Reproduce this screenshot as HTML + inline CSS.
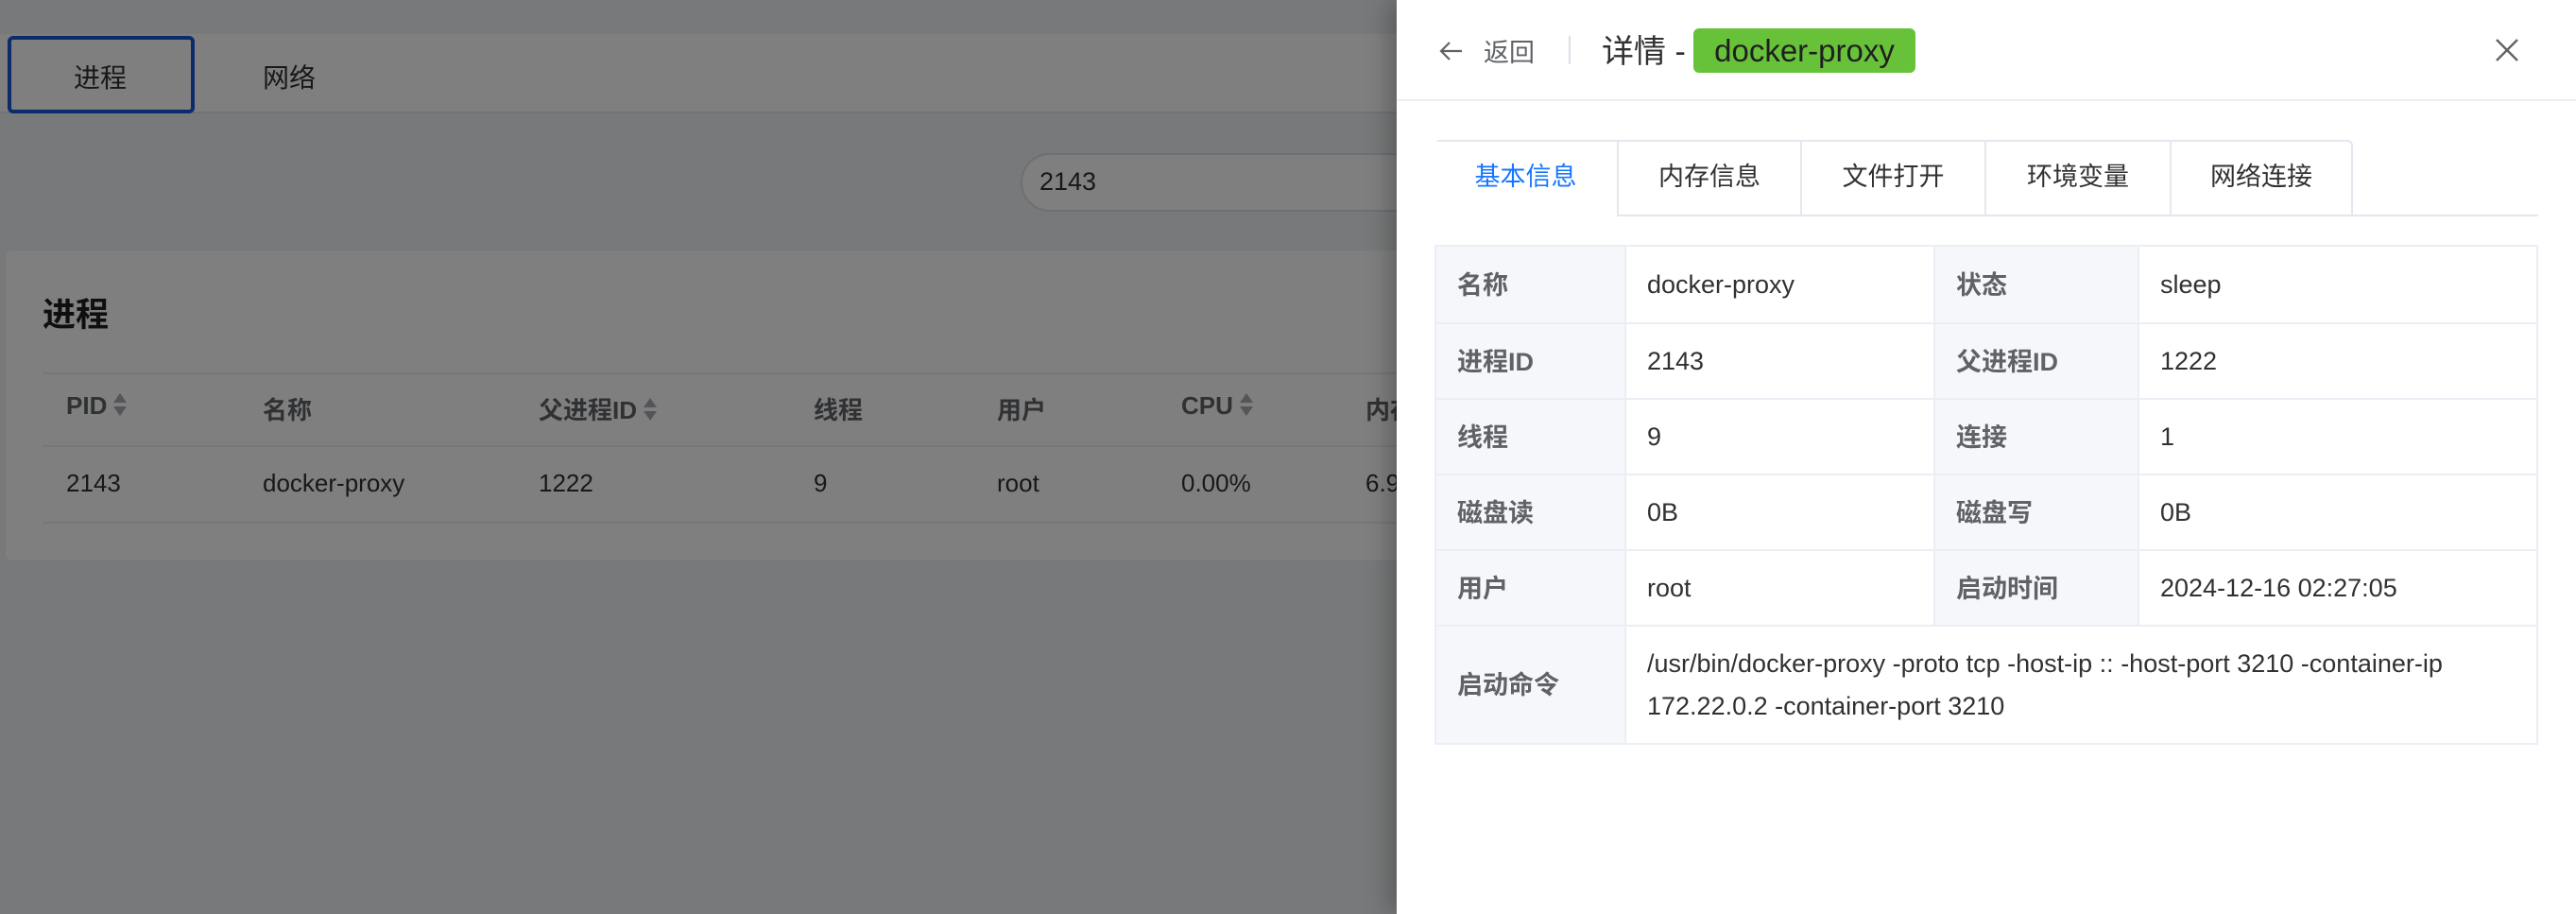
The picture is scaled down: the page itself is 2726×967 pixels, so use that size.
<!DOCTYPE html>
<html><head><meta charset="utf-8"><style>
*{box-sizing:border-box;margin:0;padding:0}
body{width:2726px;height:967px;overflow:hidden;position:relative;background:#f0f2f5;font-family:"Liberation Sans","Noto Sans CJK SC",sans-serif;color:#303133}
.abs{position:absolute}
.mask{position:absolute;left:0;top:0;width:2726px;height:967px;background:rgba(0,0,0,0.5)}
.drawer{position:absolute;left:1478px;top:0;width:1248px;height:967px;background:#fff;box-shadow:-8px 0 24px rgba(0,0,0,0.25)}
table{border-collapse:collapse}
.info td{border:2px solid #ebeef5;font-size:27px;padding-left:22px}
.info td.l{background:#f5f7fa;font-weight:bold;color:#606266;padding-bottom:4px}
.sort{display:inline-block;vertical-align:-3px;margin-left:6px}
</style></head><body>
<div class="abs" style="left:0;top:36px;width:2726px;height:84px;background:#fff;border-bottom:2px solid #e4e7ed"></div>
<div class="abs" style="left:8px;top:38px;width:198px;height:82px;border:4px solid #1a56d6;border-radius:6px;background:#fff"></div>
<div class="abs" style="left:78px;top:61px;font-size:28px;color:#303133">进程</div>
<div class="abs" style="left:278px;top:61px;font-size:28px;color:#303133">网络</div>
<div class="abs" style="left:1080px;top:162px;width:1400px;height:62px;border:2px solid #dcdfe6;border-radius:31px;background:#fff"></div>
<div class="abs" style="left:1100px;top:177px;font-size:27px;color:#303133">2143</div>
<div class="abs" style="left:5px;top:264px;width:2700px;height:330px;background:#fff;border-radius:8px;border:1px solid #ebeef5"></div>
<div class="abs" style="left:45px;top:305px;font-size:35px;font-weight:bold;color:#1f1f1f">进程</div>
<div class="abs" style="left:45px;top:394px;width:1440px;height:2px;background:#ebeef5"></div>
<div class="abs" style="left:45px;top:471px;width:1440px;height:2px;background:#ebeef5"></div>
<div class="abs" style="left:45px;top:552px;width:1440px;height:2px;background:#ebeef5"></div>
<div class="abs" style="top:414px;left:0;font-size:26px;font-weight:bold;color:#606266;width:1500px;height:34px">
<span class="abs" style="left:70px">PID<svg class="sort" width="16" height="26" viewBox="0 0 16 26"><path d="M8 1L15 11H1Z M8 25L15 15H1Z" fill="#a8abb2"/></svg></span>
<span class="abs" style="left:278px">名称</span>
<span class="abs" style="left:570px">父进程ID<svg class="sort" width="16" height="26" viewBox="0 0 16 26"><path d="M8 1L15 11H1Z M8 25L15 15H1Z" fill="#a8abb2"/></svg></span>
<span class="abs" style="left:861px">线程</span>
<span class="abs" style="left:1055px">用户</span>
<span class="abs" style="left:1250px">CPU<svg class="sort" width="16" height="26" viewBox="0 0 16 26"><path d="M8 1L15 11H1Z M8 25L15 15H1Z" fill="#a8abb2"/></svg></span>
<span class="abs" style="left:1445px">内存</span>
</div>
<div class="abs" style="top:496px;left:0;font-size:26px;color:#303133;width:1500px;height:34px">
<span class="abs" style="left:70px">2143</span>
<span class="abs" style="left:278px">docker-proxy</span>
<span class="abs" style="left:570px">1222</span>
<span class="abs" style="left:861px">9</span>
<span class="abs" style="left:1055px">root</span>
<span class="abs" style="left:1250px">0.00%</span>
<span class="abs" style="left:1445px">6.9</span>
</div>
<div class="mask"></div>
<div class="drawer">
 <div class="abs" style="left:0;top:105px;width:1248px;height:2px;background:#ebeef5"></div>
 <svg class="abs" style="left:44px;top:40px" width="28" height="28" viewBox="0 0 28 28"><path d="M25 14H4M12 5L3 14l9 9" fill="none" stroke="#606266" stroke-width="2.2"/></svg>
 <div class="abs" style="left:92px;top:34px;font-size:27px;color:#606266">返回</div>
 <div class="abs" style="left:182px;top:38px;width:2px;height:30px;background:#dcdfe6"></div>
 <div class="abs" style="left:217px;top:27px;font-size:34px;color:#303133">详情 -</div>
 <div class="abs" style="left:314px;top:30px;width:235px;height:47px;background:#67c23a;border-radius:6px;font-size:33px;color:#1f1f1f;text-align:center;line-height:47px">docker-proxy</div>
 <svg class="abs" style="left:1162px;top:40px" width="26" height="26" viewBox="0 0 26 26"><path d="M2 2L24 24M24 2L2 24" stroke="#606266" stroke-width="2.4"/></svg>
 <div class="abs" style="left:40px;top:227px;width:1168px;height:2px;background:#e4e7ed"></div>
 <div class="abs" style="left:40px;top:148px;width:972px;height:81px;border:2px solid #e4e7ed;border-bottom:none;border-radius:6px 6px 0 0;background:#fff"></div>
 <div class="abs" style="left:40px;top:150px;height:79px;display:flex;font-size:27px;color:#303133">
  <div style="width:195px;text-align:center;line-height:75px;color:#1677ff;background:#fff;border-right:2px solid #e4e7ed">基本信息</div>
  <div style="width:194px;text-align:center;line-height:75px;border-right:2px solid #e4e7ed;border-bottom:2px solid #e4e7ed">内存信息</div>
  <div style="width:195px;text-align:center;line-height:75px;border-right:2px solid #e4e7ed;border-bottom:2px solid #e4e7ed">文件打开</div>
  <div style="width:196px;text-align:center;line-height:75px;border-right:2px solid #e4e7ed;border-bottom:2px solid #e4e7ed">环境变量</div>
  <div style="width:190px;text-align:center;line-height:75px;border-bottom:2px solid #e4e7ed">网络连接</div>
 </div>
 <table class="info abs" style="left:40px;top:259px;width:1168px">
  <colgroup><col style="width:201px"><col style="width:327px"><col style="width:216px"><col></colgroup>
  <tr style="height:82px"><td class="l">名称</td><td>docker-proxy</td><td class="l">状态</td><td>sleep</td></tr>
  <tr style="height:80px"><td class="l">进程ID</td><td>2143</td><td class="l">父进程ID</td><td>1222</td></tr>
  <tr style="height:80px"><td class="l">线程</td><td>9</td><td class="l">连接</td><td>1</td></tr>
  <tr style="height:80px"><td class="l">磁盘读</td><td>0B</td><td class="l">磁盘写</td><td>0B</td></tr>
  <tr style="height:80px"><td class="l">用户</td><td>root</td><td class="l">启动时间</td><td>2024-12-16 02:27:05</td></tr>
  <tr style="height:125px"><td class="l">启动命令</td><td colspan="3" style="line-height:45px">/usr/bin/docker-proxy -proto tcp -host-ip :: -host-port 3210 -container-ip<br>172.22.0.2 -container-port 3210</td></tr>
 </table>
</div>
</body></html>
